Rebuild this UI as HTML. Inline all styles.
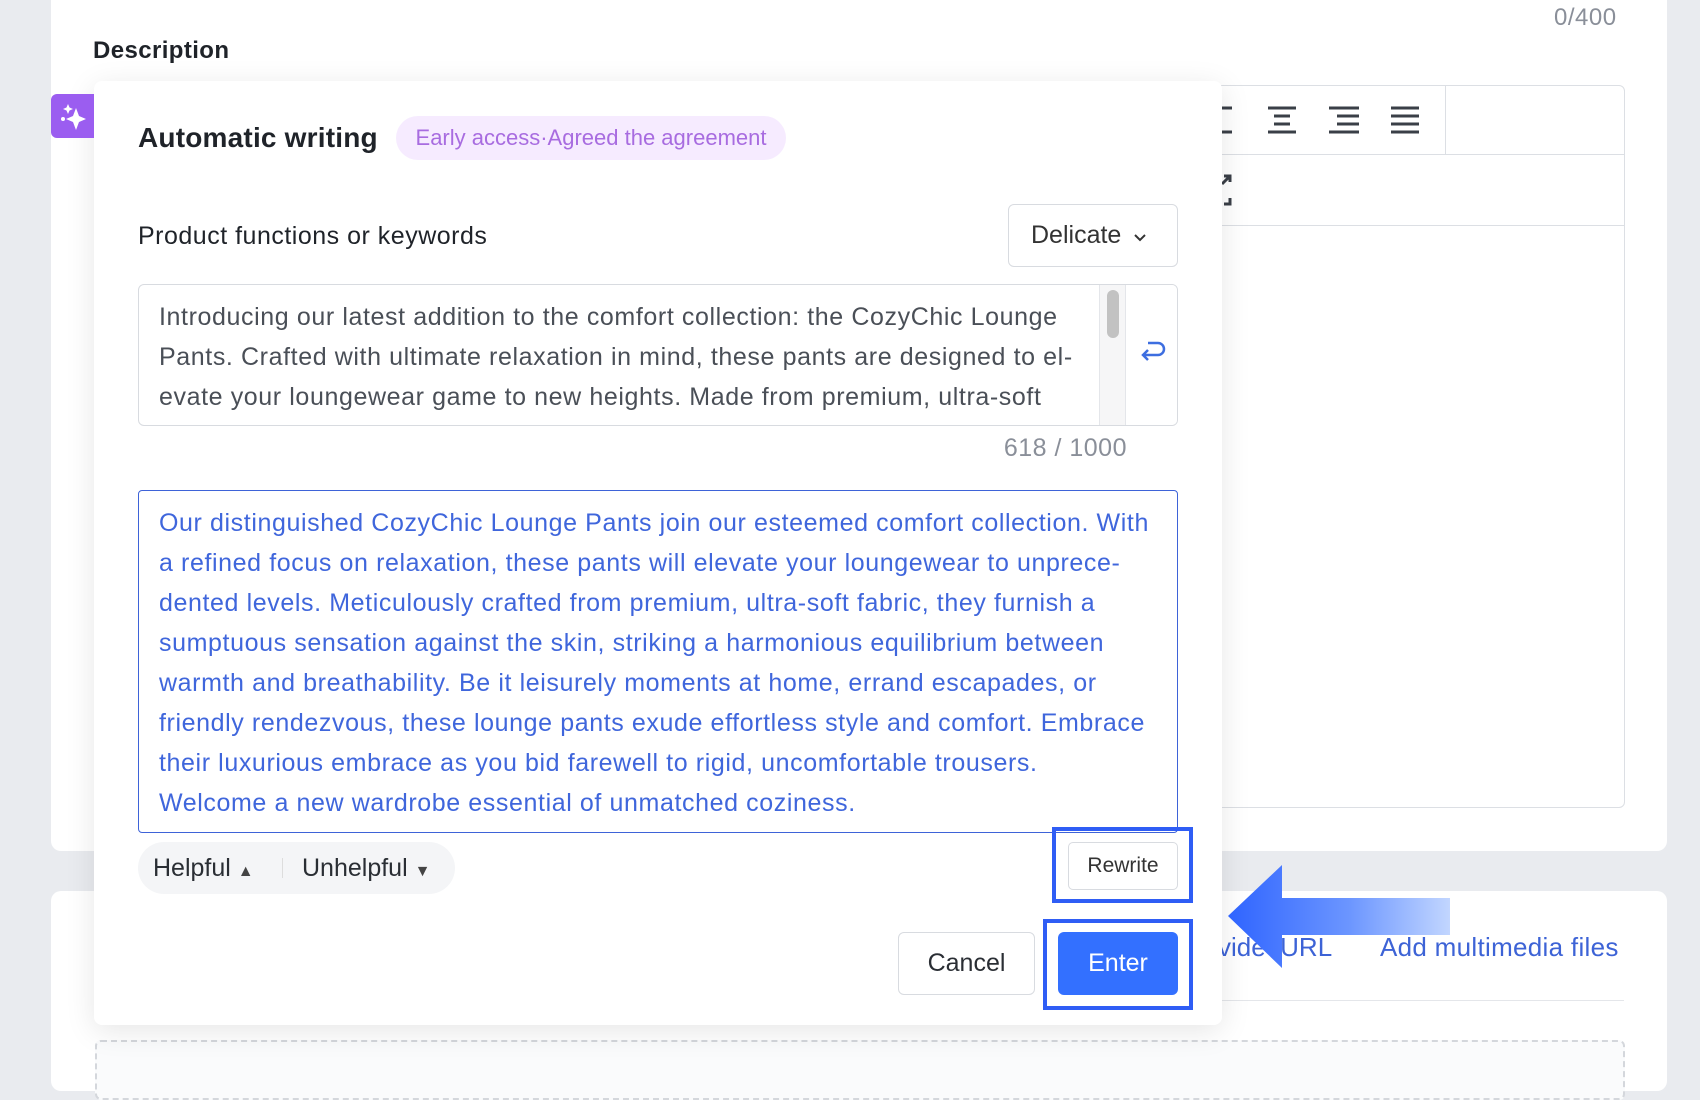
<!DOCTYPE html>
<html><head><meta charset="utf-8"><style>
*{box-sizing:border-box;margin:0;padding:0}
body{width:1700px;height:1073px;background:#e9ebef;font-family:"Liberation Sans",sans-serif;position:relative;overflow:hidden;color:#222}
.abs{position:absolute}
.card{background:#fff}
.line{white-space:nowrap}
</style></head><body>
<div class="abs card" style="left:51px;top:0;width:1616px;height:851px;border-radius:0 0 10px 10px"></div>
<div class="abs card" style="left:51px;top:891px;width:1616px;height:200px;border-radius:10px"></div>
<div class="abs" style="left:1554px;top:4px;font-size:24px;letter-spacing:0.5px;color:#8a8f99">0/400</div>
<div class="abs" style="left:93px;top:37px;font-size:24px;letter-spacing:0.4px;font-weight:bold;color:#1f2329">Description</div>

<div class="abs" style="left:1160px;top:85px;width:465px;height:723px;border:1px solid #dcdfe4;border-radius:6px;background:#fff">
  <div style="height:69px;border-bottom:1px solid #dcdfe4;position:relative">
    <div class="abs" style="left:284px;top:0;width:1px;height:69px;background:#dcdfe4"></div>
  </div>
  <div style="height:71px;border-bottom:1px solid #dcdfe4"></div>
</div>
<svg class="abs" style="left:1215px;top:102px" width="240" height="36" viewBox="0 0 240 36" stroke="#3a3f47" stroke-width="3">
  <path d="M5 6h12M5 30h12"/>
  <path d="M53 6h28M59 14h16M59 22h16M53 30h28"/>
  <path d="M114 6h30M122 14h22M122 22h22M114 30h30"/>
  <path d="M176 6h28M176 14h28M176 22h28M176 30h28"/>
</svg>
<svg class="abs" style="left:1218px;top:172px" width="20" height="36" viewBox="0 0 20 36" stroke="#3a3f47" stroke-width="3" fill="none">
  <path d="M4 12l8-8M6 4h6v6M12 26v6H6"/>
</svg>

<div class="abs" style="left:1218px;top:932px;font-size:26px;color:#3d63d6">vide&nbsp;&nbsp;URL</div>
<div class="abs" style="left:1380px;top:932px;font-size:26px;letter-spacing:0.3px;color:#3d63d6">Add multimedia files</div>
<div class="abs" style="left:1222px;top:1000px;width:402px;height:1px;background:#e4e6ea"></div>
<div class="abs" style="left:95px;top:1040px;width:1530px;height:60px;border:2px dashed #d4d7dc;border-radius:6px;background:#fafbfc"></div>

<div class="abs" style="left:94px;top:81px;width:1128px;height:944px;background:#fff;border-radius:8px;box-shadow:0 6px 30px rgba(0,0,0,0.10)"></div>
<div class="abs" style="left:51px;top:94px;width:43px;height:44px;background:#9b5df0;border-radius:6px 0 0 6px">
<svg width="43" height="44" viewBox="0 0 43 44"><path d="M25 14l3 8 7 3-7 3-3 8-3-8-7-3 7-3z" fill="#fff"/><path d="M17 10l1.5 3.5 3.5 1.5-3.5 1.5L17 20l-1.5-3.5L12 15l3.5-1.5z" fill="#fff"/><circle cx="12" cy="25" r="2" fill="#fff"/></svg></div>
<div class="abs" style="left:138px;top:122px;font-size:28px;letter-spacing:0.2px;font-weight:bold;color:#1f2329">Automatic writing</div>
<div class="abs" style="left:396px;top:116px;width:390px;height:44px;border-radius:22px;background:#f6ebff;color:#a86ce0;font-size:22px;line-height:44px;text-align:center">Early access·Agreed the agreement</div>
<div class="abs" style="left:138px;top:222px;font-size:25px;letter-spacing:0.5px;color:#1f2329">Product functions or keywords</div>
<div class="abs" style="left:1008px;top:204px;width:170px;height:63px;border:1px solid #d8dbe0;border-radius:6px;font-size:25px;color:#333;line-height:61px;padding-left:22px">Delicate <svg width="16" height="12" viewBox="0 0 16 12" style="margin-left:4px"><path d="M3 4l5 5 5-5" stroke="#333" stroke-width="2" fill="none"/></svg></div>

<div class="abs" style="left:138px;top:284px;width:1040px;height:142px;border:1px solid #d8dbe0;border-radius:6px;overflow:hidden">
  <div class="abs" style="left:20px;top:12px;font-size:25px;letter-spacing:0.6px;line-height:40px;color:#4a4f57">
    <div class="line">Introducing our latest addition to the comfort collection: the CozyChic Lounge</div>
    <div class="line">Pants. Crafted with ultimate relaxation in mind, these pants are designed to el-</div>
    <div class="line">evate your loungewear game to new heights. Made from premium, ultra-soft</div>
    <div class="line">fabric, they provide a luxurious feel against your skin while offering the perfect</div>
  </div>
  <div class="abs" style="left:960px;top:0;width:27px;height:142px;background:#f6f6f7;border-left:1px solid #e4e6ea;border-right:1px solid #e4e6ea"><div style="margin:5px auto;width:12px;height:48px;border-radius:6px;background:#c2c2c2"></div></div>
  <div class="abs" style="left:987px;top:0;width:53px;height:142px;background:#fff"><svg style="position:absolute;left:12px;top:50px" width="30" height="30" viewBox="0 0 30 30" fill="none" stroke="#3d6ee0" stroke-width="2.5"><path d="M10 8h10a6 6 0 010 12H6M10 15l-5 5 5 5"/></svg></div>
</div>
<div class="abs" style="left:980px;top:434px;width:147px;text-align:right;font-size:25px;letter-spacing:0.5px;color:#8a8f99">618 / 1000</div>

<div class="abs" style="left:138px;top:490px;width:1040px;height:343px;border:1.5px solid #3e63d8;border-radius:4px">
  <div class="abs" style="left:20px;top:12px;font-size:25px;letter-spacing:0.6px;line-height:40px;color:#3f66dc">
    <div class="line">Our distinguished CozyChic Lounge Pants join our esteemed comfort collection. With</div>
    <div class="line">a refined focus on relaxation, these pants will elevate your loungewear to unprece-</div>
    <div class="line">dented levels. Meticulously crafted from premium, ultra-soft fabric, they furnish a</div>
    <div class="line">sumptuous sensation against the skin, striking a harmonious equilibrium between</div>
    <div class="line">warmth and breathability. Be it leisurely moments at home, errand escapades, or</div>
    <div class="line">friendly rendezvous, these lounge pants exude effortless style and comfort. Embrace</div>
    <div class="line">their luxurious embrace as you bid farewell to rigid, uncomfortable trousers.</div>
    <div class="line">Welcome a new wardrobe essential of unmatched coziness.</div>
  </div>
</div>

<div class="abs" style="left:138px;top:842px;width:317px;height:52px;border-radius:26px;background:#f4f5f7;font-size:25px;color:#2a2e34;line-height:52px">
  <span class="abs" style="left:15px">Helpful <span style="font-size:16px;color:#444">▲</span></span>
  <span class="abs" style="left:144px;top:16px;width:1px;height:20px;background:#ddd"></span>
  <span class="abs" style="left:164px">Unhelpful <span style="font-size:16px;color:#444">▼</span></span>
</div>

<div class="abs" style="left:1052px;top:827px;width:141px;height:76px;border:4px solid #2f5df5"></div>
<div class="abs" style="left:1068px;top:842px;width:110px;height:48px;border:1px solid #d8dbe0;border-radius:5px;font-size:21px;line-height:46px;text-align:center;color:#333;background:#fff">Rewrite</div>

<div class="abs" style="left:898px;top:932px;width:137px;height:63px;border:1px solid #d8dbe0;border-radius:6px;font-size:25px;line-height:61px;text-align:center;color:#2a2e34">Cancel</div>
<div class="abs" style="left:1043px;top:919px;width:150px;height:91px;border:4px solid #2f5df5;background:#fff"></div>
<div class="abs" style="left:1058px;top:932px;width:120px;height:63px;border-radius:6px;background:#3370ff;font-size:25px;line-height:63px;text-align:center;color:#fff">Enter</div>

<svg class="abs" style="left:1225px;top:862px" width="230" height="110" viewBox="0 0 230 110">
<defs><linearGradient id="g" x1="0" x2="1"><stop offset="0" stop-color="#2f64ff"/><stop offset="0.55" stop-color="#6c96ff"/><stop offset="1" stop-color="#c2d6ff"/></linearGradient></defs>
<path d="M3 54L57 3V36H225V73H57V106Z" fill="url(#g)"/>
</svg>
</body></html>
